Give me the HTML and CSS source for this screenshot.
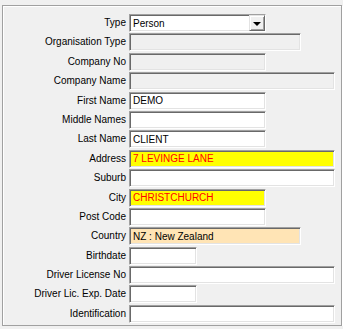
FILE: index.html
```html
<!DOCTYPE html>
<html>
<head>
  <title>Client Details</title>
  <link rel="stylesheet" href="styles.css">
</head>
<body>
  <div class="panel">
    <div class="form-grid">
      <label>Type</label>
      <div class="combo short">
        <span class="combo-text">Person</span>
        <span class="combo-btn"><span class="arrow"></span></span>
      </div>

      <label>Organisation Type</label>
      <input type="text" class="medium" disabled>

      <label>Company No</label>
      <input type="text" class="short" disabled>

      <label>Company Name</label>
      <input type="text" class="long" disabled>

      <label>First Name</label>
      <input type="text" class="short" value="DEMO">

      <label>Middle Names</label>
      <input type="text" class="short">

      <label>Last Name</label>
      <input type="text" class="short" value="CLIENT">

      <label>Address</label>
      <input type="text" class="long highlight" value="7 LEVINGE LANE">

      <label>Suburb</label>
      <input type="text" class="long">

      <label>City</label>
      <input type="text" class="short highlight" value="CHRISTCHURCH">

      <label>Post Code</label>
      <input type="text" class="short">

      <label>Country</label>
      <input type="text" class="medium lookup" value="NZ : New Zealand" readonly>

      <label>Birthdate</label>
      <input type="text" class="tiny">

      <label>Driver License No</label>
      <input type="text" class="long">

      <label>Driver Lic. Exp. Date</label>
      <input type="text" class="tiny">

      <label>Identification</label>
      <input type="text" class="long">
    </div>
  </div>
</body>
</html>
```

FILE: styles.css
```css
body {
  margin: 0;
  background-color: #f0f0f0;
  font-family: 'Liberation Sans', Arial, sans-serif;
  font-size: 10px;
  color: #000000;
}

.panel {
  margin: 5px 0 0 2px;
  width: 340px;
  height: 321px;
  box-sizing: border-box;
  padding-top: 8px;
  border: 1px solid #a0a0a0;
  box-shadow: inset 1px 1px 0 #ffffff, 1px 1px 0 #ffffff;
}

.form-grid {
  display: grid;
  grid-template-columns: 123px auto;
  grid-auto-rows: 19.4px;
  column-gap: 3px;
  align-items: start;
}

label {
  text-align: right;
  line-height: 18px;
  white-space: nowrap;
}

input[type="text"],
.combo {
  height: 18px;
  box-sizing: border-box;
  margin: 0;
  padding: 0 2px;
  font-family: 'Liberation Sans', Arial, sans-serif;
  font-size: 10px;
  color: #000000;
  background-color: #ffffff;
  border: 1px solid;
  border-color: #a0a0a0 #ffffff #ffffff #a0a0a0;
  box-shadow: inset 1px 1px 0 #696969, inset -1px -1px 0 #e3e3e3;
  outline: none;
  border-radius: 0;
}

input[type="text"] {
  padding-left: 3px;
}

input[disabled] {
  background-color: #f0f0f0;
}

.highlight {
  background-color: #ffff00 !important;
  color: #ff0000 !important;
}

.lookup {
  background-color: #ffe4b5 !important;
}

.short { width: 137px; }
.medium { width: 172px; }
.long { width: 206px; }
.tiny { width: 68px; }

.combo {
  display: flex;
  align-items: center;
  justify-content: space-between;
  padding: 0 0 0 3px;
}

.combo-btn {
  width: 16px;
  height: 16px;
  box-sizing: border-box;
  background-color: #f0f0f0;
  border: 1px solid;
  border-color: #e3e3e3 #696969 #696969 #e3e3e3;
  box-shadow: inset 1px 1px 0 #ffffff, inset -1px -1px 0 #a0a0a0;
  display: flex;
  align-items: center;
  justify-content: center;
}

.arrow {
  width: 0;
  height: 0;
  border-left: 4px solid transparent;
  border-right: 4px solid transparent;
  border-top: 4px solid #000000;
  margin-top: 1px;
}
```
